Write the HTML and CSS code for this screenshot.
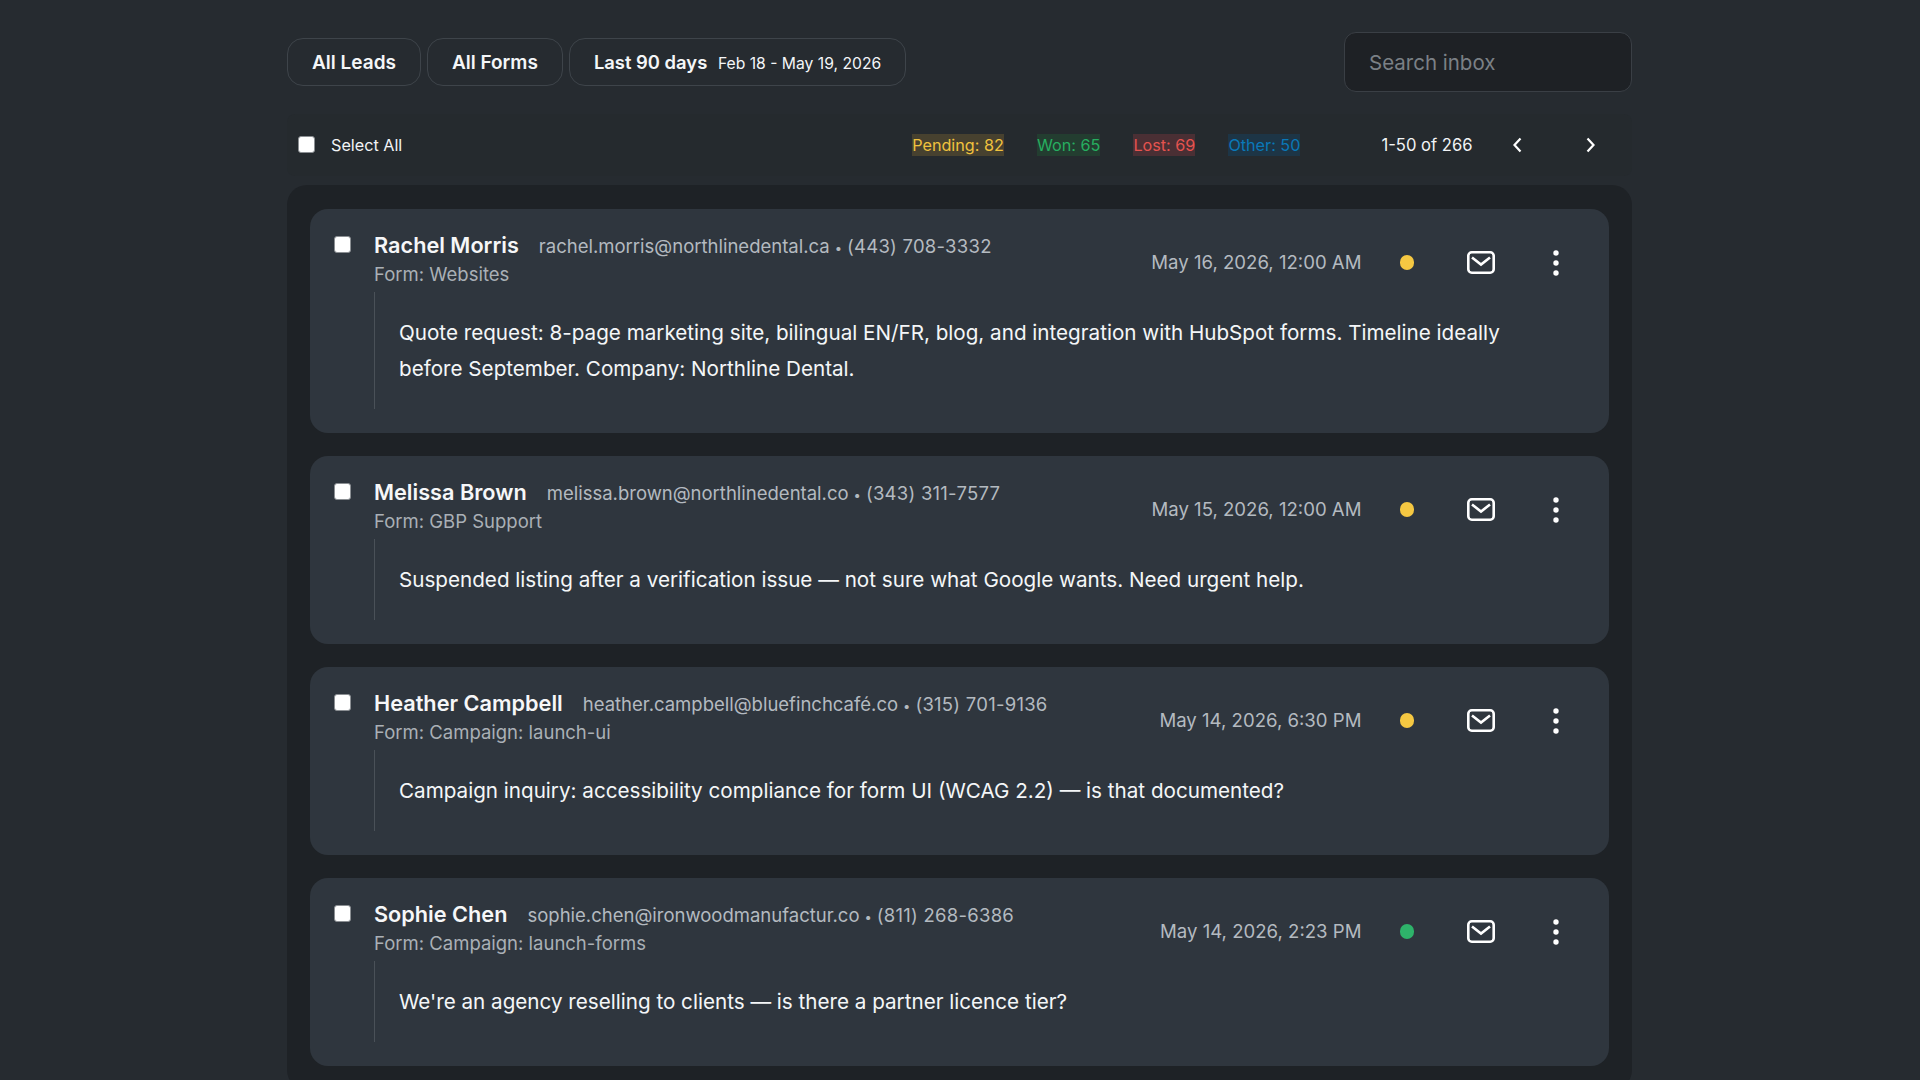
FILE: index.html
```html
<!DOCTYPE html>
<html lang="en">
<head>
<meta charset="utf-8">
<title>Inbox</title>
<link rel="stylesheet" href="styles.css">
</head>
<body>
<div class="page">
	<div class="filters">
		<div class="pills">
			<button class="pill">All Leads</button>
			<button class="pill">All Forms</button>
			<button class="pill pill-range">Last 90 days <small>Feb 18 - May 19, 2026</small></button>
		</div>
		<input class="search" type="text" placeholder="Search inbox">
	</div>

	<div class="toolbar">
		<label class="select-all"><input class="check" type="checkbox"> Select All</label>
		<div class="counts">
			<span class="count pending">Pending: 82</span>
			<span class="count won">Won: 65</span>
			<span class="count lost">Lost: 69</span>
			<span class="count other">Other: 50</span>
		</div>
		<div class="pager">
			<span>1-50 of 266</span>
			<button class="arrow"><svg width="11" height="16" viewBox="0 0 11 16"><path d="M8.5 1.5 2.5 8l6 6.5"/></svg></button>
			<button class="arrow"><svg width="11" height="16" viewBox="0 0 11 16"><path d="M2.5 1.5 8.5 8l-6 6.5"/></svg></button>
		</div>
	</div>

	<div class="list">
		<div class="lead">
			<input class="check" type="checkbox">
			<div class="lead-main">
				<div class="lead-head">
					<div class="who">
						<div class="who-top"><strong>Rachel Morris</strong><span>rachel.morris@northlinedental.ca<b class="sep">&bull;</b><span class="phone">(443) 708-3332</span></span></div>
						<div class="form">Form: Websites</div>
					</div>
					<div class="date">May 16, 2026, 12:00 AM</div>
					<i class="dot yellow"></i>
					<svg class="mail" width="28" height="23" viewBox="0 0 28 23"><rect x="1.3" y="1.3" width="25.4" height="20.4" rx="3.5"/><path d="M5 6.5l9 7 9-7"/></svg>
					<svg class="more" width="6" height="26" viewBox="0 0 6 26"><circle cx="3" cy="3" r="2.7"/><circle cx="3" cy="13" r="2.7"/><circle cx="3" cy="23" r="2.7"/></svg>
				</div>
				<blockquote>Quote request: 8-page marketing site, bilingual EN/FR, blog, and integration with HubSpot forms. Timeline ideally before September. Company: Northline Dental.</blockquote>
			</div>
		</div>

		<div class="lead">
			<input class="check" type="checkbox">
			<div class="lead-main">
				<div class="lead-head">
					<div class="who">
						<div class="who-top"><strong>Melissa Brown</strong><span>melissa.brown@northlinedental.co<b class="sep">&bull;</b><span class="phone">(343) 311-7577</span></span></div>
						<div class="form">Form: GBP Support</div>
					</div>
					<div class="date">May 15, 2026, 12:00 AM</div>
					<i class="dot yellow"></i>
					<svg class="mail" width="28" height="23" viewBox="0 0 28 23"><rect x="1.3" y="1.3" width="25.4" height="20.4" rx="3.5"/><path d="M5 6.5l9 7 9-7"/></svg>
					<svg class="more" width="6" height="26" viewBox="0 0 6 26"><circle cx="3" cy="3" r="2.7"/><circle cx="3" cy="13" r="2.7"/><circle cx="3" cy="23" r="2.7"/></svg>
				</div>
				<blockquote>Suspended listing after a verification issue — not sure what Google wants. Need urgent help.</blockquote>
			</div>
		</div>

		<div class="lead">
			<input class="check" type="checkbox">
			<div class="lead-main">
				<div class="lead-head">
					<div class="who">
						<div class="who-top"><strong>Heather Campbell</strong><span>heather.campbell@bluefinchcafé.co<b class="sep">&bull;</b><span class="phone">(315) 701-9136</span></span></div>
						<div class="form">Form: Campaign: launch-ui</div>
					</div>
					<div class="date">May 14, 2026, 6:30 PM</div>
					<i class="dot yellow"></i>
					<svg class="mail" width="28" height="23" viewBox="0 0 28 23"><rect x="1.3" y="1.3" width="25.4" height="20.4" rx="3.5"/><path d="M5 6.5l9 7 9-7"/></svg>
					<svg class="more" width="6" height="26" viewBox="0 0 6 26"><circle cx="3" cy="3" r="2.7"/><circle cx="3" cy="13" r="2.7"/><circle cx="3" cy="23" r="2.7"/></svg>
				</div>
				<blockquote>Campaign inquiry: accessibility compliance for form UI (WCAG 2.2) — is that documented?</blockquote>
			</div>
		</div>

		<div class="lead">
			<input class="check" type="checkbox">
			<div class="lead-main">
				<div class="lead-head">
					<div class="who">
						<div class="who-top"><strong>Sophie Chen</strong><span>sophie.chen@ironwoodmanufactur.co<b class="sep">&bull;</b><span class="phone">(811) 268-6386</span></span></div>
						<div class="form">Form: Campaign: launch-forms</div>
					</div>
					<div class="date">May 14, 2026, 2:23 PM</div>
					<i class="dot green"></i>
					<svg class="mail" width="28" height="23" viewBox="0 0 28 23"><rect x="1.3" y="1.3" width="25.4" height="20.4" rx="3.5"/><path d="M5 6.5l9 7 9-7"/></svg>
					<svg class="more" width="6" height="26" viewBox="0 0 6 26"><circle cx="3" cy="3" r="2.7"/><circle cx="3" cy="13" r="2.7"/><circle cx="3" cy="23" r="2.7"/></svg>
				</div>
				<blockquote>We're an agency reselling to clients — is there a partner licence tier?</blockquote>
			</div>
		</div>
	</div>
</div>
</body>
</html>
```

FILE: styles.css
```css
* {
	box-sizing: border-box;
}
html, body {
	height: 100%;
	margin: 0;
	overflow: hidden;
}
body {
	background: #262b30;
	color: #f2f4f6;
	font: 16px/1.5 Inter, "Liberation Sans", sans-serif;
}
button, input {
	font-family: inherit;
}
.page {
	width: 1345px;
	margin-left: 287px;
	padding-top: 32px;
}
.check {
	appearance: none;
	flex: none;
	width: 17px;
	height: 17px;
	margin: 0;
	border: 1px solid #8b8f93;
	border-radius: 3px;
	background: #fff;
}

/* Filters */
.filters {
	display: flex;
	justify-content: space-between;
	align-items: center;
	height: 60px;
}
.pills {
	display: flex;
	gap: 6px;
}
.pill {
	height: 48px;
	padding: 0 24px;
	border: 1.5px solid #3e444a;
	border-radius: 16px;
	background: none;
	color: #f4f6f8;
	font-size: 19px;
	font-weight: 600;
}
.pill-range {
	font-size: 18.4px;
}
.pill small {
	margin-left: 6px;
	font-size: 15.7px;
	font-weight: 400;
}
.search {
	width: 288px;
	height: 60px;
	padding: 0 24px;
	border: 1.5px solid #3a3f45;
	border-radius: 12px;
	background: #1e2125;
	color: #fff;
	font-size: 20.5px;
}
.search::placeholder {
	color: #7b8086;
	opacity: 1;
}

/* Toolbar */
.toolbar {
	display: flex;
	align-items: center;
	height: 62px;
	margin-top: 22px;
	padding: 0 25.5px 0 11px;
	background: #252a2e;
	border-radius: 8px;
	font-size: 16.2px;
}
.select-all {
	display: flex;
	align-items: center;
	gap: 16px;
}
.counts {
	display: flex;
	gap: 33px;
	margin-left: auto;
}
.count {
	line-height: 22px;
}
.pending { color: #f0c23e; background: #47412f; }
.won { color: #27ae60; background: #233d30; }
.lost { color: #e5534f; background: #4a2f34; }
.other { color: #0a78b8; background: #1d3546; }
.pager {
	display: flex;
	align-items: center;
	margin-left: 81px;
	font-size: 16.6px;
}
.arrow {
	display: flex;
	justify-content: center;
	width: 32px;
	padding: 0;
	border: 0;
	background: none;
}
.arrow + .arrow {
	margin-left: 41.5px;
}
.pager span {
	margin-right: 28.5px;
}
.arrow path {
	fill: none;
	stroke: #fff;
	stroke-width: 2.2;
}

/* Leads */
.list {
	display: flex;
	flex-direction: column;
	gap: 23px;
	margin-top: 9px;
	padding: 24px 23px;
	background: #1e2226;
	border-radius: 20px;
}
.lead {
	display: flex;
	padding: 24px 50px 24px 24px;
	background: #2f363e;
	border-radius: 18px;
}
.lead > .check {
	margin-top: 3px;
}
.lead-main {
	flex: 1;
	margin-left: 23px;
}
.lead-head {
	display: flex;
	align-items: center;
	height: 59px;
}
.who {
	flex: 1;
	align-self: flex-start;
}
.who-top {
	display: flex;
	align-items: baseline;
	gap: 20px;
	line-height: 24px;
	color: #b4bac0;
	font-size: 18.5px;
}
.who-top strong {
	color: #f6f7f8;
	font-size: 21.7px;
	font-weight: 600;
}
.sep {
	margin: 0 5px;
	font-size: 13px;
	font-weight: 400;
}
.phone {
	letter-spacing: 0.25px;
}
.form {
	margin-top: 1px;
	line-height: 27px;
	color: #aab0b6;
	font-size: 18.5px;
}
.date {
	color: #b4bac0;
	font-size: 18.6px;
}
.dot {
	width: 14.5px;
	height: 14.5px;
	margin-left: 38px;
	border-radius: 50%;
}
.yellow { background: #f5c842; }
.green { background: #2eb36a; }
.mail {
	margin-left: 53px;
}
.mail rect, .mail path {
	fill: none;
	stroke: #fff;
	stroke-width: 2.6;
}
.more {
	margin-left: 58px;
	fill: #fff;
}
blockquote {
	margin: 0;
	padding: 23px 24px 22px;
	border-left: 1px solid #4a5158;
	color: #f4f6f8;
	font-size: 20.65px;
	line-height: 36px;
}
```
